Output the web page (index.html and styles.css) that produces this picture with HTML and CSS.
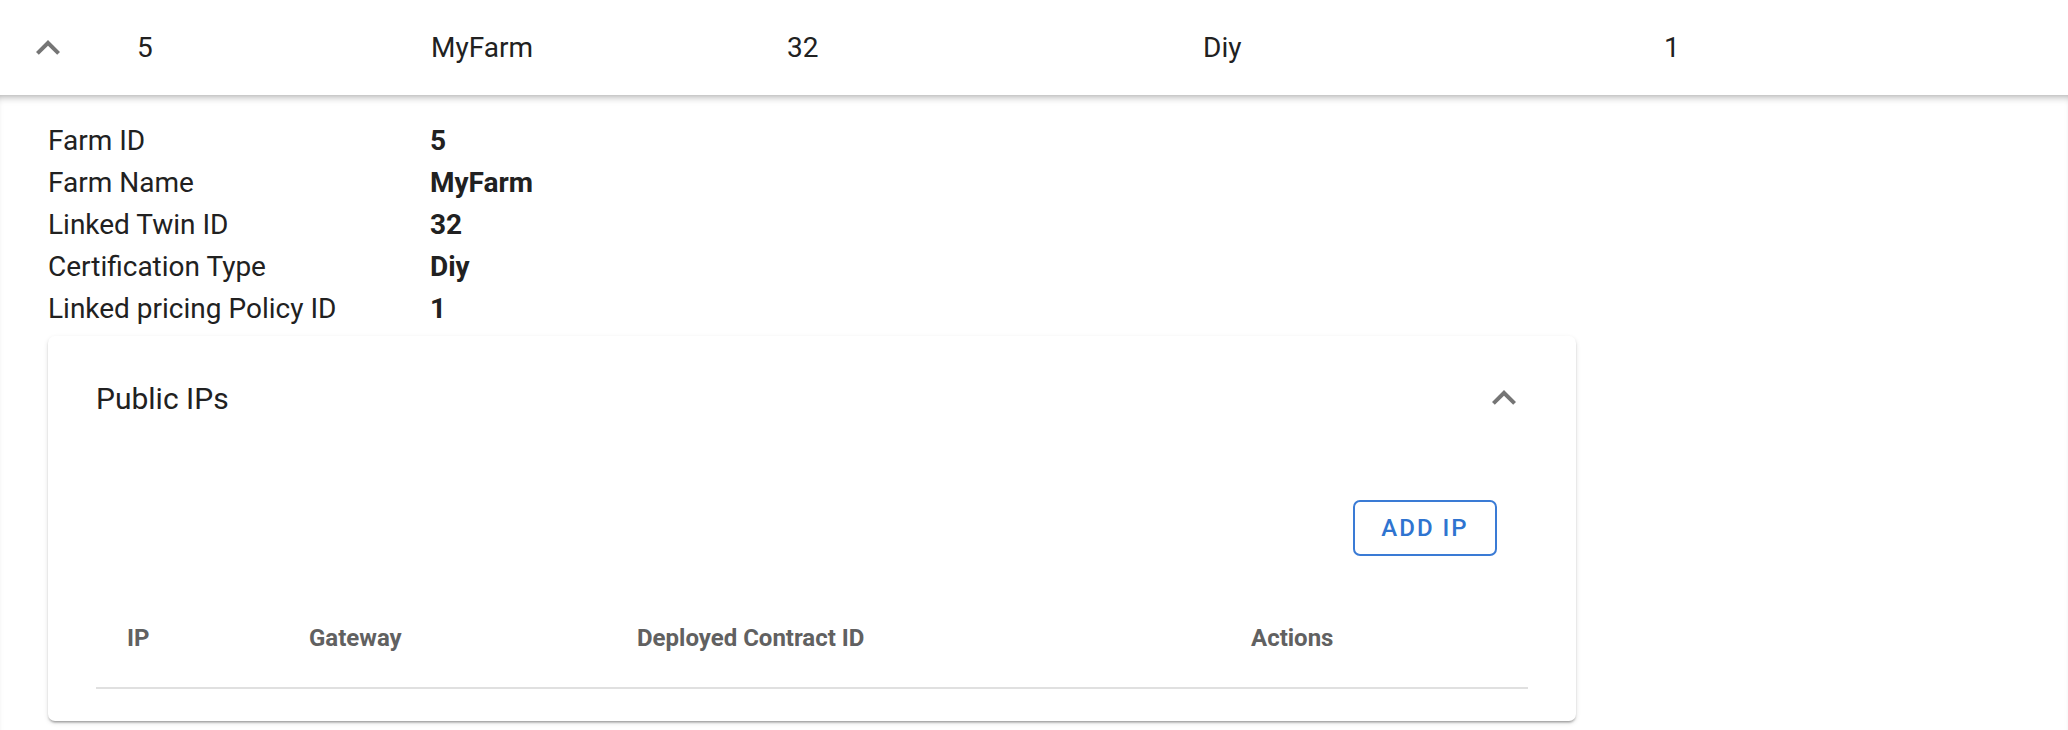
FILE: index.html
```html
<!DOCTYPE html>
<html lang="en">
<head>
<meta charset="utf-8">
<title>Farm</title>
<link rel="stylesheet" href="styles.css">
</head>
<body>
<div class="row">
  <div class="cell cell-toggle">
    <svg class="chev" viewBox="0 0 24 24"><path d="M12 8l-6 6 1.41 1.41L12 10.83l4.59 4.58L18 14z"/></svg>
  </div>
  <div class="cell">5</div>
  <div class="cell">MyFarm</div>
  <div class="cell">32</div>
  <div class="cell">Diy</div>
  <div class="cell">1</div>
</div>
<div class="details">
  <dl class="info">
    <dt>Farm ID</dt><dd>5</dd>
    <dt>Farm Name</dt><dd>MyFarm</dd>
    <dt>Linked Twin ID</dt><dd>32</dd>
    <dt>Certification Type</dt><dd>Diy</dd>
    <dt>Linked pricing Policy ID</dt><dd>1</dd>
  </dl>
  <div class="card">
    <div class="summary">
      <span class="title">Public IPs</span>
      <svg class="chev" viewBox="0 0 24 24"><path d="M12 8l-6 6 1.41 1.41L12 10.83l4.59 4.58L18 14z"/></svg>
    </div>
    <div class="actions">
      <button class="btn">ADD IP</button>
    </div>
    <div class="table-head">
      <div class="th">IP</div>
      <div class="th">Gateway</div>
      <div class="th">Deployed Contract ID</div>
      <div class="th">Actions</div>
    </div>
  </div>
</div>
</body>
</html>
```
FILE: styles.css
```css
* { box-sizing: border-box; }
html, body { margin: 0; padding: 0; background: #fff; }
body {
  font-family: Roboto, "Liberation Sans", Arial, sans-serif;
  color: #212121;
  width: 2068px;
  height: 730px;
  overflow: hidden;
}
.chev { width: 48px; height: 48px; fill: #757575; display: block; }
.row {
  display: grid;
  grid-template-columns: 137px 294px 356px 416px 461px 1fr;
  height: 95px;
  align-items: center;
  font-size: 28px;
  background: #fff;
}
.cell { line-height: 40px; }
.cell-toggle { padding-left: 24px; }
.details {
  box-shadow: inset 0 7px 8px -6px rgba(0,0,0,0.38);
  padding: 25px 0 0 48px;
  height: 635px;
}
.info {
  margin: 0;
  display: grid;
  grid-template-columns: 382px auto;
  font-size: 28px;
  line-height: 42px;
}
.info dt { margin: 0; }
.info dd { margin: 0; font-weight: 700; }
.card {
  margin-top: 6px;
  width: 1528px;
  height: 385px;
  background: #fff;
  border-radius: 7px;
  box-shadow: 0 3px 2px -2px rgba(0,0,0,0.2), 0 2px 2px 0 rgba(0,0,0,0.14), 0 2px 5px 0 rgba(0,0,0,0.12);
  padding: 0 48px;
}
.summary {
  height: 124px;
  display: flex;
  align-items: center;
  justify-content: space-between;
}
.title { font-size: 30px; }
.actions {
  margin-top: 40px;
  display: flex;
  justify-content: flex-end;
  padding-right: 31px;
}
.btn {
  height: 56px;
  width: 144px;
  border: 2px solid #3a7bd5;
  border-radius: 7px;
  background: #fff;
  color: #2f74d0;
  font-family: Roboto, "Liberation Sans", Arial, sans-serif;
  font-size: 24px;
  font-weight: 500;
  letter-spacing: 2px;
  padding: 0;
}
.table-head {
  margin-top: 33px;
  height: 100px;
  border-bottom: 2px solid #e0e0e0;
  display: grid;
  grid-template-columns: 182px 328px 614px 1fr;
  align-items: center;
  padding-left: 31px;
  font-size: 24px;
  font-weight: 700;
  color: #616161;
}
```
